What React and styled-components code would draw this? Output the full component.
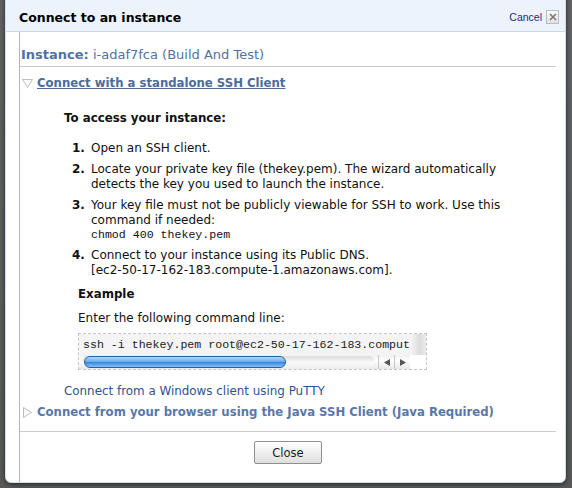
import styled, { createGlobalStyle } from 'styled-components';

const GlobalStyle = createGlobalStyle`
	html, body {
		margin: 0;
		padding: 0;
		background: #5d5d5d;
	}
	body {
		font-family: 'DejaVu Sans', Verdana, sans-serif;
	}
`;

const Page = styled.div`
	width: 572px;
	height: 488px;
	overflow: hidden;
	background: linear-gradient(#626262, #585858);
	padding: 0 6px 0 5px;
	box-sizing: border-box;
`;

const Dialog = styled.div`
	margin-top: -6px;
	height: 489px;
	box-sizing: border-box;
	background: #fff;
	border: 1px solid #cfdeee;
	border-radius: 6px;
	box-shadow: 0 1px 5px rgba(0, 0, 0, 0.6);
	display: flex;
	flex-direction: column;
	overflow: hidden;
`;

const Header = styled.div`
	height: 37px;
	box-sizing: border-box;
	padding: 8px 6px 0 13px;
	background: #ecf3fc;
	border-bottom: 1px solid #c6daef;
	display: flex;
	align-items: center;
`;

const Title = styled.h1`
	flex: 1;
	margin: 0;
	font-size: 12.5px;
	font-weight: bold;
	color: #000;
`;

const Cancel = styled.a`
	font-family: 'Liberation Sans', Arial, sans-serif;
	font-size: 10.5px;
	color: #1c2a86;
	margin-right: 4px;
	cursor: pointer;
`;

const CloseBox = styled.span`
	width: 11px;
	height: 12px;
	border: 1px solid #bcbcbc;
	background: linear-gradient(#fbfbfb, #e2e2e2);
	display: grid;
	place-items: center;
`;

const Body = styled.div`
	flex: 1;
	margin: 0 9px 0 13px;
	border-left: 1px solid #b4b4b4;
	display: flex;
	flex-direction: column;
`;

const Instance = styled.div`
	padding: 15px 0 0 1px;
	font-size: 13px;
	line-height: 16px;
	color: #5172a2;
	b {
		font-weight: bold;
	}
`;

const Rule = styled.hr`
	margin: ${({ $top }) => $top}px 0 0;
	border: 0;
	border-top: 1px solid #cbcbcb;
	height: 0;
`;

const SectionHead = styled.div`
	display: flex;
	align-items: center;
	gap: 4px;
	padding-left: 2px;
	margin-top: ${({ $top }) => $top}px;
	font-size: 11.7px;
	line-height: 16px;
	font-weight: bold;
	color: ${({ $open }) => ($open ? '#4c6c9c' : '#5978a8')};
	a {
		text-decoration: ${({ $open }) => ($open ? 'underline' : 'none')};
		cursor: pointer;
	}
`;

const Panel = styled.div`
	padding: 20px 0 0 44px;
	color: #111;
	font-size: 12px;
	line-height: 15px;
`;

const Lead = styled.div`
	font-weight: bold;
	font-size: 11.8px;
`;

const Steps = styled.ol`
	list-style: none;
	margin: 15px 0 0 8px;
	padding: 0;
	max-width: 432px;
`;

const Step = styled.li`
	display: grid;
	grid-template-columns: 19px 1fr;
	margin-bottom: 6px;
	b {
		font-weight: bold;
	}
`;

const Mono = styled.code`
	display: block;
	font-family: 'Liberation Mono', 'Courier New', monospace;
	font-size: 11.6px;
	line-height: 14px;
`;

const Example = styled.div`
	margin: 9px 0 0 14px;
`;

const SubHead = styled.div`
	font-weight: bold;
	font-size: 11.8px;
`;

const Para = styled.div`
	margin-top: 9px;
`;

const CodeBox = styled.div`
	margin-top: 7px;
	width: 347px;
	border: 1px dashed #c4c4c4;
	display: grid;
	grid-template-columns: 331px 16px;
	grid-template-rows: 21px 14px;
`;

const CodeLine = styled.pre`
	margin: 0;
	padding: 4px 0 0 4px;
	overflow: hidden;
	white-space: pre;
	background: #f4f4f4;
	font-family: 'Liberation Mono', 'Courier New', monospace;
	font-size: 11.6px;
	line-height: 14px;
	color: #222;
`;

const VStrip = styled.div`
	background: linear-gradient(90deg, #f7f7f7, #dcdcdc 60%, #ececec);
`;

const HScroll = styled.div`
	display: flex;
	align-items: center;
	background: linear-gradient(#f0f0f0, #fff 40%, #e8e8e8);
	padding-left: 2px;
`;

const Track = styled.div`
	flex: 1;
	height: 13px;
	border-radius: 7px;
	background: linear-gradient(#dcdcdc, #fafafa 50%, #ececec);
	display: flex;
	align-items: center;
	padding-left: 3px;
`;

const Thumb = styled.div`
	width: 202px;
	height: 12px;
	box-sizing: border-box;
	border-radius: 7px;
	border: 1px solid #2a5f9d;
	background: linear-gradient(#b8d9f7, #6aaef0 45%, #3a8ae0 55%, #86c2f5);
`;

const Arrows = styled.div`
	display: flex;
	height: 14px;
	width: 31px;
	margin-left: 3px;
	border-left: 1px solid #c9c9c9;
`;

const Arrow = styled.div`
	flex: 1;
	display: grid;
	place-items: center;
	& + & {
		border-left: 1px solid #c9c9c9;
	}
`;

const Corner = styled.div`
	background: #fff;
`;

const PuttyLink = styled.a`
	display: block;
	margin: 13px 0 0 44px;
	font-size: 11.9px;
	line-height: 16px;
	color: #2e5393;
	cursor: pointer;
`;

const Footer = styled.div`
	display: flex;
	justify-content: center;
	padding: 9px 0 0;
`;

const Button = styled.button`
	width: 68px;
	height: 23px;
	border: 1px solid #8e8e8e;
	border-radius: 2px;
	background: linear-gradient(#ffffff, #f0f0f0 50%, #dedede);
	font-family: 'DejaVu Sans', Verdana, sans-serif;
	font-size: 11.5px;
	color: #1a1a1a;
	padding: 0;
`;

const Triangle = ({ open }) => (
	<svg width='11' height='11' viewBox='0 0 11 11'>
		{open ? (
			<polygon points='0.5,1.5 10.5,1.5 5.5,9.5' fill='#fafafa' stroke='#bdbdbd' />
		) : (
			<polygon points='1.5,0.5 9.5,5.5 1.5,10.5' fill='#fafafa' stroke='#bdbdbd' />
		)}
	</svg>
);

const steps = [
	{ n: '1.', text: <>Open an SSH client.</> },
	{
		n: '2.',
		text: (
			<>
				Locate your private key file (thekey.pem). The wizard automatically detects the key you
				used to launch the instance.
			</>
		),
	},
	{
		n: '3.',
		text: (
			<>
				Your key file must not be publicly viewable for SSH to work. Use this command if needed:
				<Mono>chmod 400 thekey.pem</Mono>
			</>
		),
	},
	{
		n: '4.',
		text: (
			<>
				Connect to your instance using its Public DNS.
				<br />
				[ec2-50-17-162-183.compute-1.amazonaws.com].
			</>
		),
	},
];

const App = () => {
	return (
		<Page>
			<GlobalStyle />
			<Dialog>
				<Header>
					<Title>Connect to an instance</Title>
					<Cancel>Cancel</Cancel>
					<CloseBox>
						<svg width='8' height='8' viewBox='0 0 8 8'>
							<path d='M1 1 L7 7 M7 1 L1 7' stroke='#777' strokeWidth='1.6' />
						</svg>
					</CloseBox>
				</Header>
				<Body>
					<Instance>
						<b>Instance:</b> i-adaf7fca (Build And Test)
					</Instance>
					<Rule $top={3} />
					<SectionHead $top={8} $open>
						<Triangle open />
						<a>Connect with a standalone SSH Client</a>
					</SectionHead>
					<Panel>
						<Lead>To access your instance:</Lead>
						<Steps>
							{steps.map((s) => (
								<Step key={s.n}>
									<b>{s.n}</b>
									<span>{s.text}</span>
								</Step>
							))}
						</Steps>
						<Example>
							<SubHead>Example</SubHead>
							<Para>Enter the following command line:</Para>
							<CodeBox>
								<CodeLine>ssh -i thekey.pem root@ec2-50-17-162-183.compute-1.amazonaws.com</CodeLine>
								<VStrip />
								<HScroll>
									<Track>
										<Thumb />
									</Track>
									<Arrows>
										<Arrow>
											<svg width='6' height='7' viewBox='0 0 6 7'>
												<polygon points='6,0 6,7 0,3.5' fill='#555' />
											</svg>
										</Arrow>
										<Arrow>
											<svg width='6' height='7' viewBox='0 0 6 7'>
												<polygon points='0,0 0,7 6,3.5' fill='#555' />
											</svg>
										</Arrow>
									</Arrows>
								</HScroll>
								<Corner />
							</CodeBox>
						</Example>
					</Panel>
					<PuttyLink>Connect from a Windows client using PuTTY</PuttyLink>
					<SectionHead $top={5}>
						<Triangle />
						<a>Connect from your browser using the Java SSH Client (Java Required)</a>
					</SectionHead>
					<Rule $top={11} />
					<Footer>
						<Button>Close</Button>
					</Footer>
				</Body>
			</Dialog>
		</Page>
	);
};

export default App;
